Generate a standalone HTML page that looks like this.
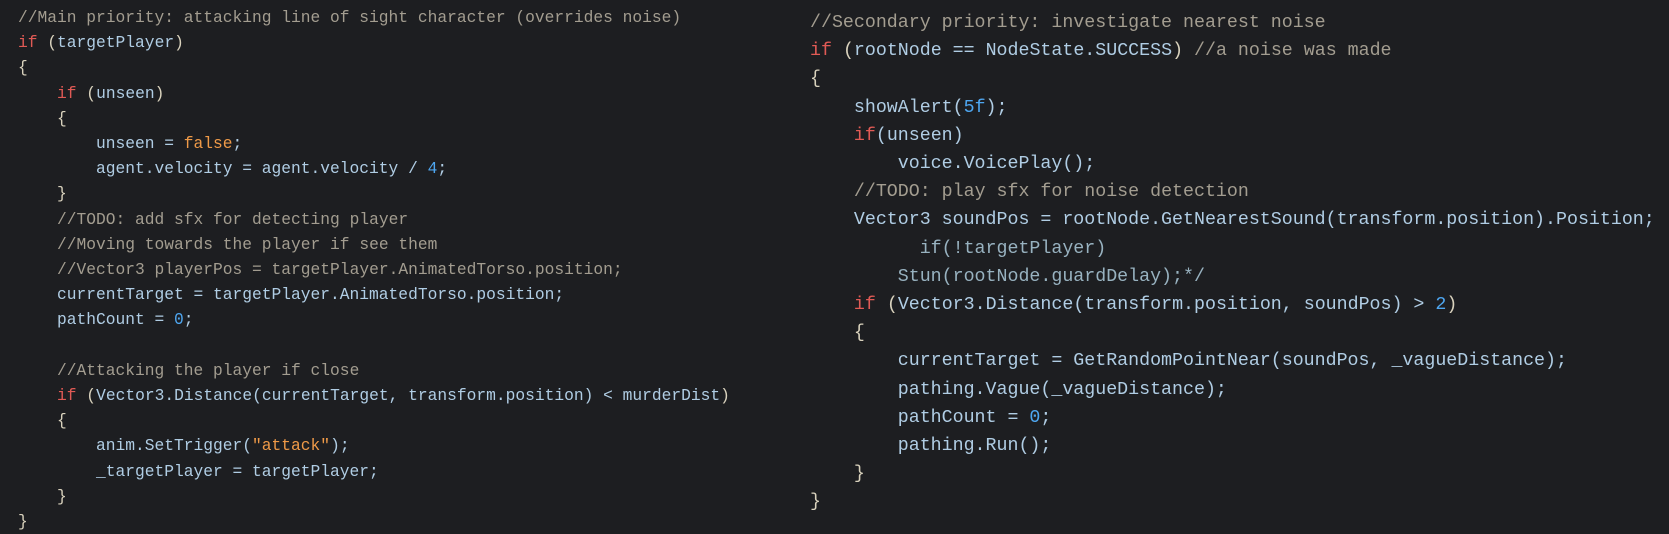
<!DOCTYPE html>
<html><head><meta charset="utf-8"><style>
html,body{margin:0;padding:0;width:1669px;height:532px;overflow:hidden;background:#1d1e21;}
pre{position:absolute;margin:0;font-family:"Liberation Mono","DejaVu Sans Mono",monospace;color:#b0cde4;white-space:pre;}
#l{left:18px;top:5px;font-size:16.25px;line-height:25.2px;}
#r{left:810px;top:9px;font-size:18.3px;line-height:28.2px;}
.c{color:#a39d90}.k{color:#e05a55}.n{color:#4ea6f0}.o{color:#ef9a48}.s{color:#ef9a48}.b{color:#d9d2bd}.d{color:#98b2c0}
</style></head><body>
<pre id="l"><span class="c">//Main priority: attacking line of sight character (overrides noise)</span>
<span class="k">if</span> <span class="b">(</span>targetPlayer<span class="b">)</span>
<span class="b">{</span>
    <span class="k">if</span> <span class="b">(</span>unseen<span class="b">)</span>
    <span class="b">{</span>
        unseen = <span class="o">false</span>;
        agent.velocity = agent.velocity / <span class="n">4</span>;
    <span class="b">}</span>
    <span class="c">//TODO: add sfx for detecting player</span>
    <span class="c">//Moving towards the player if see them</span>
    <span class="c">//Vector3 playerPos = targetPlayer.AnimatedTorso.position;</span>
    currentTarget = targetPlayer.AnimatedTorso.position;
    pathCount = <span class="n">0</span>;

    <span class="c">//Attacking the player if close</span>
    <span class="k">if</span> <span class="b">(</span>Vector3.Distance(currentTarget, transform.position) &lt; murderDist<span class="b">)</span>
    <span class="b">{</span>
        anim.SetTrigger(<span class="s">"attack"</span>);
        _targetPlayer = targetPlayer;
    <span class="b">}</span>
<span class="b">}</span></pre>
<pre id="r"><span class="c">//Secondary priority: investigate nearest noise</span>
<span class="k">if</span> <span class="b">(</span>rootNode == NodeState.SUCCESS<span class="b">)</span> <span class="c">//a noise was made</span>
<span class="b">{</span>
    showAlert(<span class="n">5f</span>);
    <span class="k">if</span>(unseen)
        voice.VoicePlay();
    <span class="c">//TODO: play sfx for noise detection</span>
    Vector3 soundPos = rootNode.GetNearestSound(transform.position).Position;
<span class="d">          if(!targetPlayer)</span>
<span class="d">        Stun(rootNode.guardDelay);*/</span>
    <span class="k">if</span> <span class="b">(</span>Vector3.Distance(transform.position, soundPos) &gt; <span class="n">2</span><span class="b">)</span>
    <span class="b">{</span>
        currentTarget = GetRandomPointNear(soundPos, _vagueDistance);
        pathing.Vague(_vagueDistance);
        pathCount = <span class="n">0</span>;
        pathing.Run();
    <span class="b">}</span>
<span class="b">}</span></pre>
</body></html>
